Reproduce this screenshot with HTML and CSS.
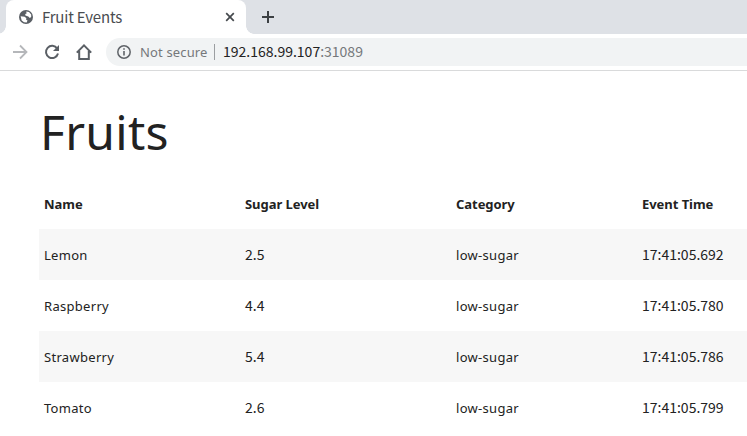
FILE: index.html
```html
<!DOCTYPE html>
<html lang="en">
<head>
<meta charset="utf-8">
<title>Fruit Events</title>
<link rel="stylesheet" href="styles.css">
</head>
<body>
<header class="tabs">
  <div class="tab">
    <svg class="globe" viewBox="0 0 14 14"><circle cx="7" cy="7" r="7" fill="#5a5f65"/><path d="M7.200 1.500 10 2.100 12.200 4.600V7L10.800 8 9.300 6.500 6.400 5.600 6.200 4.100 7.600 3.400ZM1.600 6.300 5.700 6.700 7.400 8.300 7 9.600 8.500 10.500 7.700 12.400 5 12.300 2.700 10.400Z" fill="#fff"/></svg>
    <span class="tab-title">Fruit Events</span>
    <svg class="close" viewBox="0 0 10 10"><path d="m1.2 1.2 7.6 7.6m0-7.6L1.2 8.8" fill="none" stroke="#45494d" stroke-width="1.7"/></svg>
  </div>
  <svg class="plus" viewBox="0 0 12 12"><path d="M6 0v12M0 6h12" stroke="#3c4043" stroke-width="2"/></svg>
</header>
<nav class="toolbar">
  <svg class="tool" viewBox="0 0 16 16"><path d="M1 8h13M8 1.5 14.5 8 8 14.5" fill="none" stroke="#b5b7ba" stroke-width="1.8"/></svg>
  <svg class="tool" viewBox="0 0 16 16"><path d="M13.2 4.6A6.1 6.1 0 1 0 14 9.5" fill="none" stroke="#5a5f65" stroke-width="2"/><path d="M15 1v6H9Z" fill="#5a5f65"/></svg>
  <svg class="tool" viewBox="0 0 16 16"><path d="M.8 8.6 8 1.4l7.2 7.2M3.2 7v8h9.6V7" fill="none" stroke="#5a5f65" stroke-width="2"/></svg>
  <div class="address">
    <svg class="info" viewBox="0 0 14 14"><circle cx="7" cy="7" r="6.2" fill="none" stroke="#5f6368" stroke-width="1.5"/><path d="M7 3.2v1.6M7 6v4.6" stroke="#5f6368" stroke-width="1.6"/></svg>
    <span class="security">Not secure</span>
    <span class="url">192.168.99.107<span class="port">:31089</span></span>
  </div>
</nav>
<main>
  <h1>Fruits</h1>
  <table>
    <thead><tr><th class="name">Name</th><th class="sugar">Sugar Level</th><th class="category">Category</th><th>Event Time</th></tr></thead>
    <tbody>
      <tr><td>Lemon</td><td class="num">2.5</td><td>low-sugar</td><td class="num">17:41:05.692</td></tr>
      <tr><td>Raspberry</td><td class="num">4.4</td><td>low-sugar</td><td class="num">17:41:05.780</td></tr>
      <tr><td>Strawberry</td><td class="num">5.4</td><td>low-sugar</td><td class="num">17:41:05.786</td></tr>
      <tr><td>Tomato</td><td class="num">2.6</td><td>low-sugar</td><td class="num">17:41:05.799</td></tr>
    </tbody>
  </table>
</main>
</body>
</html>
```
FILE: styles.css
```css
* { box-sizing: border-box; }
body {
  margin: 0;
  height: 436px;
  overflow: hidden;
  background: #fff;
  color: #222;
  font-family: "Noto Sans", sans-serif;
  font-size: 14px;
}
svg { display: block; flex: none; }
.tabs {
  display: flex;
  align-items: center;
  height: 34px;
  background: #dee1e6;
}
.tab {
  position: relative;
  display: flex;
  align-items: center;
  width: 240px;
  height: 34px;
  margin-left: 6px;
  padding: 0 11px 0 13px;
  background: #fff;
  border-radius: 8px 8px 0 0;
}
.tab::before, .tab::after {
  content: "";
  position: absolute;
  bottom: 0;
  width: 8px;
  height: 8px;
}
.tab::before { left: -8px; background: radial-gradient(circle at 0 0, #dee1e6 7.5px, #fff 8px); }
.tab::after { right: -8px; background: radial-gradient(circle at 100% 0, #dee1e6 7.5px, #fff 8px); }
.globe { width: 14px; height: 14px; }
.tab-title { margin-left: 9px; color: #4a4d51; font-family: "Noto Sans CJK SC", sans-serif; font-size: 15px; letter-spacing: -.2px; line-height: 20px; padding-bottom: 1px; white-space: nowrap; }
.close { width: 10px; height: 10px; margin-left: auto; }
.plus { width: 12px; height: 12px; margin-left: 16px; }
.toolbar {
  display: flex;
  align-items: center;
  gap: 16px;
  height: 37px;
  padding-left: 12px;
  border-bottom: 1px solid #d9dadb;
}
.tool { width: 16px; height: 16px; }
.address {
  display: flex;
  align-items: center;
  flex: 1;
  height: 28px;
  margin-left: -2px;
  padding-left: 11px;
  background: #f1f3f4;
  border-radius: 14px 0 0 14px;
  line-height: 20px;
  white-space: nowrap;
}
.info { width: 14px; height: 14px; }
.security { width: 75px; height: 16px; line-height: 16px; margin-left: 9px; color: #75787b; border-right: 1px solid #9b9ea1; font-size: 13px; letter-spacing: .15px; }
.url { margin-left: 8px; padding-bottom: 2px; font-family: "Noto Sans CJK SC", sans-serif; font-size: 14px; }
.port { color: #75787b; }
main { padding: 28px 0 0 39px; }
h1 { margin: 0 0 0 1px; height: 79px; font-size: 48px; font-weight: 400; line-height: 66px; letter-spacing: .3px; }
table { width: 728px; border-collapse: collapse; table-layout: fixed; }
th, td { height: 51px; padding: 0 5px; text-align: left; line-height: 20px; font-size: 13px; white-space: nowrap; }
th { font-weight: 700; letter-spacing: -.05px; }
td { letter-spacing: .3px; }
.num { padding-bottom: 2px; font-family: "Noto Sans CJK SC", sans-serif; font-size: 14px; letter-spacing: 0; }
.name { width: 201px; }
.sugar { width: 211px; }
.category { width: 186px; }
tbody tr:nth-child(odd) { background: #f7f7f7; }
```
